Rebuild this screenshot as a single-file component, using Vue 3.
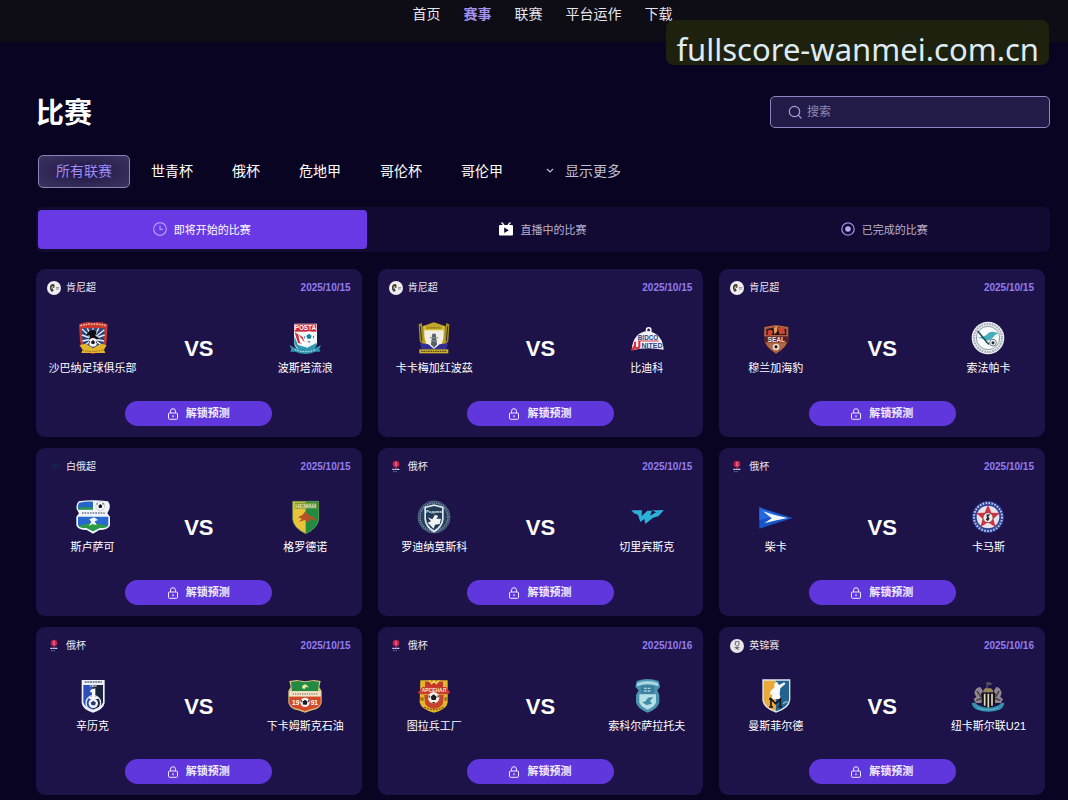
<template>
  <div class="page">
    <svg class="sprite" xmlns="http://www.w3.org/2000/svg" aria-hidden="true">
      <!-- team crests -->
      <symbol id="crest-shabana" viewBox="0 0 102 102">
        <path d="M9 10Q30 0 51 5Q72 0 95 10L92 60Q90 84 51 100Q14 84 12 60Z" fill="#c8382e" />
        <path d="M17 22H86L84 60Q80 78 51 90Q22 78 19 60Z" fill="#28467e" />
        <g stroke="#e8eef4" stroke-width="4">
          <path d="M51 54L18 24M51 54L34 22M51 54L51 22M51 54L68 22M51 54L85 26M51 54L18 42M51 54L86 42M51 54L19 60M51 54L84 60M51 54L24 74M51 54L79 74" />
        </g>
        <path d="M30 42L40 30L52 26L62 32L58 44L70 52L58 58H38L42 44Z" fill="#120f18" />
        <path d="M13 14Q51 4 90 14" fill="none" stroke="#f3c9b8" stroke-width="4" stroke-dasharray="5 3" />
        <path d="M10 72L30 68L51 82L74 68L92 72L84 86L88 96H16L20 86Z" fill="#e2b52c" />
        <circle cx="51" cy="64" r="13" fill="#f4f4f4" />
        <path d="M51 57l6 5-2 7h-8l-2-7zM39 60l4 2-3 6zM62 60l-3 3 4 5z" fill="#1a1a24" />
        <path d="M20 88Q51 96 84 86" fill="none" stroke="#8c6415" stroke-width="3" stroke-dasharray="4 3" />
      </symbol>
      <symbol id="crest-posta" viewBox="0 0 102 102">
        <path d="M18 8H87V66Q84 86 52 98Q20 86 18 66Z" fill="#eef5f7" />
        <path d="M20 10H85V32H20Z" fill="#cf2438" />
        <text x="52" y="27" class="crest-text" font-size="19" fill="#fff">POSTA</text>
        <path d="M20 34L44 48L52 70L30 66Z" fill="#d42a3d" />
        <path d="M19 46L30 72L58 80L85 66V74Q70 92 52 96Q26 86 19 66Z" fill="#2b98b4" />
        <circle cx="63" cy="48" r="17" fill="#f7fbfc" />
        <path d="M63 38l8 6-3 9H58l-3-9zM48 44l4 5-3 5zM78 43l-4 5 4 6zM57 61h11l-5 4z" fill="#1d7f9e" />
        <path d="M30 38L48 62L64 70L50 74L36 64Z" fill="#fff" />
        <path d="M4 72L20 80Q52 94 84 80L99 72L94 84L97 92L82 92Q52 106 22 92L7 92L10 84Z" fill="#2f93ad" />
        <path d="M20 86Q52 98 84 86" fill="none" stroke="#d9eef4" stroke-width="3" stroke-dasharray="5 3" />
      </symbol>
      <symbol id="crest-homeboyz" viewBox="0 0 102 102">
        <path d="M16 16L51 4L86 16Q90 60 80 84H22Q12 60 16 16Z" fill="#bfa62b" />
        <path d="M22 26H80Q82 58 70 74L51 84L32 74Q20 58 22 26Z" fill="#f1efe4" />
        <path d="M20 14Q51 28 82 14L80 28H22Z" fill="#d8bd2e" />
        <path d="M28 21H74" stroke="#5c4a16" stroke-width="3" stroke-dasharray="5 2" />
        <path d="M5 10L14 6L20 40L18 72L8 60ZM97 10L88 6L82 40L84 72L94 60Z" fill="#a58f22" />
        <path d="M10 16L14 60M92 16L88 60" stroke="#3c3413" stroke-width="3" />
        <path d="M8 66L34 70L51 84L68 70L94 66L88 84H14Z" fill="#322e93" />
        <path d="M46 38H56L60 70L51 80L42 70Z" fill="#55606a" />
        <path d="M38 50H64M42 60H60" stroke="#8a9298" stroke-width="3" />
        <path d="M7 85H94V97H7Z" fill="#cdb233" />
        <path d="M12 91H90" stroke="#5e4d14" stroke-width="4" stroke-dasharray="5 2" />
      </symbol>
      <symbol id="crest-bidco" viewBox="0 0 102 102">
        <path d="M5 88Q8 34 54 30Q98 38 101 86Q50 76 5 88Z" fill="#eef0f6" />
        <circle cx="56" cy="27" r="9" fill="#f8f8fa" />
        <path d="M56 22l5 4-2 5h-6l-2-5z" fill="#20264e" />
        <text x="54" y="56" class="crest-text" font-size="19" fill="#25418c">BIDCO</text>
        <path d="M24 60H86" stroke="#d43a4a" stroke-width="3" />
        <text x="66" y="80" class="crest-text" font-size="21" fill="#2b3f86">NITED</text>
        <path d="M15 62V76Q15 82 21 82Q28 82 28 76V60" fill="none" stroke="#d92f3d" stroke-width="6" />
        <path d="M4 90Q8 74 16 70L14 86Z" fill="#d92f3d" />
      </symbol>
      <symbol id="crest-seal" viewBox="0 0 102 102">
        <path d="M16 18L51 12L88 18V56Q84 78 51 98Q20 78 15 56Z" fill="#b4633d" />
        <path d="M22 24L51 18L82 24V42H22Z" fill="#2c1420" />
        <path d="M26 30Q36 22 42 32L36 46H26ZM56 22L76 18L78 38L62 40Z" fill="#c9472f" />
        <path d="M44 20L56 16L54 32L46 40Z" fill="#e39a5c" />
        <path d="M15 46H88V64H15Z" fill="#54202a" />
        <text x="52" y="62" class="crest-text" font-size="20" fill="#f4e3d6">SEAL</text>
        <path d="M26 70L51 66L76 70Q66 84 51 92Q34 84 26 70Z" fill="#b06a48" />
        <circle cx="51" cy="78" r="10" fill="#ecdccd" />
        <path d="M51 72l5 4-2 6h-6l-2-6z" fill="#2a1820" />
      </symbol>
      <symbol id="crest-sofapaka" viewBox="0 0 102 102">
        <circle cx="51" cy="51" r="49" fill="#e9edf0" />
        <circle cx="51" cy="51" r="42" fill="none" stroke="#a3adb8" stroke-width="6" stroke-dasharray="5 3" />
        <circle cx="51" cy="51" r="35" fill="#f8fafb" stroke="#5d6c7c" stroke-width="2" />
        <path d="M20 50Q44 48 52 36Q66 28 82 38Q70 40 66 50Q52 64 40 54Z" fill="#45aebb" />
        <path d="M20 30L48 64L54 70" fill="none" stroke="#28505f" stroke-width="5" />
        <circle cx="66" cy="65" r="10" fill="#fff" stroke="#2b3440" stroke-width="2" />
        <path d="M66 60l5 4-2 6h-6l-2-6z" fill="#222b36" />
      </symbol>
      <symbol id="crest-slutsk" viewBox="0 0 102 102">
        <path d="M8 4Q50-3 96 4Q104 14 100 28L94 40L102 50V76Q98 90 70 90L51 101L32 90Q4 90 1 76V50L9 40L2 28Q-1 14 8 4Z" fill="#f2f6fa" />
        <path d="M9 8Q30 4 51 5V28H6Q4 16 9 8Z" fill="#2465c9" />
        <path d="M6 22H51V29H7Z" fill="#2f9350" />
        <circle cx="73" cy="18" r="13" fill="#fff" stroke="#aab4c0" stroke-width="2" />
        <path d="M73 12l6 5-2 7h-8l-2-7zM61 12l4-3v5zM85 12l-5-3v5z" fill="#151a22" />
        <path d="M18 39H86" stroke="#6a7488" stroke-width="5" stroke-dasharray="5 3" />
        <path d="M6 50H97V74Q92 84 70 84L51 94L32 84Q10 84 6 74Z" fill="#2868d0" />
        <path d="M7 78Q50 62 96 78Q92 84 70 84L51 94L32 84Q12 84 7 78Z" fill="#2d9a45" />
        <path d="M40 58L54 52L66 60L56 64L62 76L50 72L38 78L46 66Z" fill="#f5f8fb" />
      </symbol>
      <symbol id="crest-gorodeya" viewBox="0 0 102 102">
        <path d="M14 4H92V58Q90 84 53 101Q16 84 14 58Z" fill="#e8c43a" />
        <path d="M53 4H92V58Q90 84 53 101Z" fill="#218a43" />
        <path d="M20 8H86V26H20Z" fill="#7d9a3f" />
        <text x="53" y="24" class="crest-text" font-size="17" fill="#dfe0b4">НЕМАН</text>
        <path d="M30 52L44 44L52 34L60 44L76 50L84 62L66 58L60 68L50 60L32 66L42 56Z" fill="#b25425" />
        <path d="M14 4H92V58Q90 84 53 101Q16 84 14 58Z" fill="none" stroke="#5e9a53" stroke-width="2" />
      </symbol>
      <symbol id="crest-rodina" viewBox="0 0 102 102">
        <circle cx="51" cy="51" r="48" fill="#28405c" stroke="#6f89a1" stroke-width="2" />
        <circle cx="51" cy="51" r="42" fill="none" stroke="#8aa2b6" stroke-width="4" stroke-dasharray="4 3" />
        <path d="M22 20L51 13L80 20V58Q78 82 51 98Q24 82 22 58Z" fill="#dfe8ee" />
        <path d="M27 24L51 18L75 24V56Q73 78 51 91Q29 78 27 56Z" fill="#223a56" />
        <text x="51" y="38" class="crest-text" font-size="13" fill="#dfe8ee">Родина</text>
        <path d="M32 52L46 58L54 44L64 48L58 56L72 56L68 72L54 74L50 86L40 76L32 68L42 64Z" fill="#eef3f6" />
      </symbol>
      <symbol id="crest-chelyabinsk" viewBox="0 0 102 102">
        <path d="M4 31H36L35 48L52 32H66L60 47L78 37H84L88 31H101L86 48L68 54L46 72L43 57L31 66L24 44L12 40Z" fill="#2cb1d7" />
        <path d="M66 31H101L84 40Z" fill="#2cb1d7" />
      </symbol>
      <symbol id="crest-chaika" viewBox="0 0 102 102">
        <path d="M1 22L101 54L1 86Z" fill="#1756c8" />
        <path d="M1 22L60 46L1 60Z" fill="#2468df" />
        <path d="M12 34L44 44L86 54L46 62L16 70L38 55Z" fill="#f3f8fc" />
      </symbol>
      <symbol id="crest-kamaz" viewBox="0 0 102 102">
        <circle cx="51" cy="51" r="48" fill="#2b3f95" />
        <circle cx="51" cy="51" r="42" fill="none" stroke="#bfcaea" stroke-width="6" stroke-dasharray="5 4" />
        <circle cx="51" cy="51" r="34" fill="#e8e2ea" />
        <path d="M51 14L61 38L87 39L67 56L74 82L51 67L28 82L35 56L15 39L41 38Z" fill="#cf3342" />
        <circle cx="51" cy="53" r="15" fill="#f1ece4" stroke="#7c2333" stroke-width="2" />
        <path d="M46 44L58 42L52 50L56 56L50 64L44 58L48 54Z" fill="#26253c" />
      </symbol>
      <symbol id="crest-sinara" viewBox="0 0 102 102">
        <path d="M17 3H86V72Q82 92 51 101Q20 92 17 72Z" fill="#eef2f8" />
        <path d="M22 18H50V92Q24 84 22 70Z" fill="#2c50ba" />
        <path d="M50 18H81V70Q78 84 50 92Z" fill="#18243f" />
        <path d="M26 9H78" stroke="#5a6684" stroke-width="5" stroke-dasharray="6 2" />
        <text x="51" y="25" class="crest-text" font-size="10" fill="#d7def0">1960</text>
        <circle cx="52" cy="72" r="22" fill="none" stroke="#e3e9f4" stroke-width="4" />
        <path d="M44 32L58 28V54H66V60H40V54H48V40H42Z" fill="#f8fafc" />
        <circle cx="52" cy="73" r="14" fill="#f5f7fa" />
        <path d="M52 65l8 6-3 8H47l-3-8z" fill="#263a78" />
      </symbol>
      <symbol id="crest-neftekhimik" viewBox="0 0 102 102">
        <path d="M4 6L26 3L51 7L78 3L98 6L94 24L101 36V72Q94 92 72 94L51 101L30 94Q8 92 1 72V36L8 24Z" fill="#d9c27a" />
        <path d="M9 9L28 6L51 10L76 6L93 9L90 36H12Z" fill="#228a42" />
        <path d="M42 28Q42 18 52 16Q60 20 62 26L54 23L50 30Z" fill="#f0e9a0" />
        <path d="M4 37H98V52H4Z" fill="#efe6cf" />
        <path d="M14 45H88" stroke="#a08a66" stroke-width="5" stroke-dasharray="4 3" />
        <path d="M4 53H98V72Q92 88 70 90L51 97L32 90Q10 88 4 72Z" fill="#d4482b" />
        <text x="23" y="77" class="crest-text" font-size="20" fill="#fff">19</text>
        <text x="79" y="77" class="crest-text" font-size="20" fill="#fff">91</text>
        <circle cx="51" cy="70" r="14" fill="#f6f6f6" />
        <path d="M51 62l8 6-3 9H46l-3-9zM38 66l4-4v8zM64 66l-4-4v8z" fill="#1c1c22" />
      </symbol>
      <symbol id="crest-arsenal-tula" viewBox="0 0 102 102">
        <path d="M10 4H92V70Q90 92 51 101Q12 92 8 70Z" fill="#e5b62b" />
        <path d="M24 8H78V26H24Z" fill="#c2392a" />
        <path d="M36 4L44 14L51 6L58 14L66 4" fill="none" stroke="#f3d75f" stroke-width="4" />
        <path d="M2 42L16 24H88L100 42L88 46H14Z" fill="#c93a30" />
        <text x="51" y="40" class="crest-text" font-size="15" fill="#f6e6cf">АРСЕНАЛ</text>
        <path d="M22 48H80L78 72Q74 86 51 90Q28 86 24 72Z" fill="#c4452b" />
        <circle cx="15" cy="60" r="6" fill="#a87613" />
        <circle cx="87" cy="60" r="6" fill="#a87613" />
        <circle cx="50" cy="56" r="17" fill="#f5f1ea" />
        <path d="M50 46l9 7-3 10H44l-3-10zM34 54l4-6v10zM66 52l-4-5v10zM44 69h12l-6 4z" fill="#211a20" />
        <path d="M22 84Q51 100 80 84" fill="none" stroke="#8e5b12" stroke-width="4" stroke-dasharray="6 3" />
      </symbol>
      <symbol id="crest-sokol" viewBox="0 0 102 102">
        <path d="M20 6Q51-6 86 6L90 24L82 34L88 48V70Q84 90 53 101Q22 90 18 70V48L26 34L16 24Z" fill="#4b93ae" />
        <path d="M22 12Q53 0 84 12L86 22Q53 10 20 22Z" fill="#a8d7e2" />
        <path d="M32 22Q53 14 74 22L72 44H34Z" fill="#3c7f9d" />
        <path d="M42 28H64M42 36H64" stroke="#a9cfdd" stroke-width="4" stroke-dasharray="8 3" />
        <path d="M28 46H78V70Q74 84 53 92Q32 84 28 70Z" fill="#b4e0e6" />
        <path d="M36 70Q48 68 54 56L70 54L60 66L66 74L50 78Z" fill="#418ba5" />
      </symbol>
      <symbol id="crest-mansfield" viewBox="0 0 102 102">
        <path d="M10 1H94V62Q92 88 51 101Q12 88 10 62Z" fill="#dfeaf0" />
        <path d="M14 5H51V97Q16 84 14 62Z" fill="#eba93a" />
        <path d="M51 5H90V62Q88 84 51 97Z" fill="#236390" />
        <path d="M46 14L54 8L60 18L76 10L79 15L64 28L62 46L66 60H38L40 44L32 48L36 34L46 26Z" fill="#f8fafa" />
        <path d="M36 84V60L50 74L64 60V84M30 60H40M30 84H42M58 84H70" fill="none" stroke="#15151c" stroke-width="5" />
        <path d="M72 74Q80 66 86 70" fill="none" stroke="#7fc0d4" stroke-width="4" />
      </symbol>
      <symbol id="crest-newcastle" viewBox="0 0 102 102">
        <path d="M46 10H50V34H46ZM50 8L66 14L52 20Z" fill="#5d5662" />
        <path d="M10 42Q14 24 28 24L36 36L30 46L36 72H14L8 60L16 54Z" fill="#8e8790" />
        <path d="M92 42Q88 24 76 24L68 36L74 46L68 72H90L96 60L88 54Z" fill="#8e8790" />
        <path d="M18 36L30 54M84 36L74 54M16 64L32 58M88 64L72 58" stroke="#39343f" stroke-width="4" />
        <path d="M38 34L42 28H60L66 34V40H36Z" fill="#9b8a57" />
        <path d="M32 42H72V70Q68 84 52 88Q36 84 32 70Z" fill="#15131b" />
        <path d="M41 44V80M52 44V86M63 44V80" stroke="#e2d8bd" stroke-width="5" />
        <path d="M2 72Q14 70 20 78Q52 94 84 78Q90 70 100 72Q98 86 86 92Q52 104 18 92Q4 86 2 72Z" fill="#3192ae" />
        <path d="M20 86Q52 99 84 86" fill="none" stroke="#7cc4d6" stroke-width="3" stroke-dasharray="5 3" />
      </symbol>

      <!-- league badges -->
      <symbol id="league-kenya" viewBox="0 0 42 42">
        <circle cx="21" cy="21" r="21" fill="#f0eeee" />
        <path d="M9 16Q12 8 20 9Q25 12 22 20L17 22L20 30L13 32L9 24Z" fill="#3a363a" />
        <path d="M13 17L20 14L18 21L14 26Z" fill="#d9b67c" />
        <path d="M27 20H37M27 24H35" stroke="#8a8c92" stroke-width="3" />
      </symbol>
      <symbol id="league-belarus" viewBox="0 0 42 42">
        <path d="M6 10L14 16L26 10L38 8L34 18L24 26L14 34L16 22Z" fill="#16204e" />
      </symbol>
      <symbol id="league-ruscup" viewBox="0 0 42 42">
        <circle cx="21" cy="12" r="10" fill="#c41f4c" />
        <path d="M18 7H24L22 12L25 17H18L20 12Z" fill="#e58ba0" />
        <path d="M18 20H24V25H18Z" fill="#b02249" />
        <path d="M10 28H32" stroke="#d8d3e4" stroke-width="4" stroke-dasharray="6 1" />
        <path d="M12 35H26" stroke="#5b6cb4" stroke-width="3" stroke-dasharray="5 2" />
      </symbol>
      <symbol id="league-efl" viewBox="0 0 42 42">
        <circle cx="21" cy="21" r="21" fill="#e9e6e8" />
        <path d="M16 8H27V18L21 22L16 18Z" fill="none" stroke="#716a78" stroke-width="3" />
        <path d="M14 26H28M18 31L21 27L26 33" fill="none" stroke="#5b5463" stroke-width="3" />
      </symbol>
    </svg>

    <header class="topbar">
      <nav class="nav">
        <a v-for="item in navItems" :key="item" href="#" class="nav-link" :class="{ active: item === '赛事' }">{{ item }}</a>
      </nav>
      <div class="site-badge">fullscore-wanmei.com.cn</div>
    </header>

    <main class="content">
      <div class="title-row">
        <h1 class="title">比赛</h1>
        <label class="search">
          <svg class="search-icon" viewBox="0 0 14 14" fill="none" stroke="currentColor" stroke-width="1.2" stroke-linecap="round">
            <circle cx="6.5" cy="6.5" r="5.2" />
            <path d="M10.4 10.4L13 13" />
          </svg>
          <input v-model="keyword" type="text" placeholder="搜索" aria-label="搜索" />
        </label>
      </div>

      <div class="filters">
        <button
          v-for="league in leagues"
          :key="league"
          type="button"
          class="filter"
          :class="{ active: league === activeLeague }"
          @click="activeLeague = league"
        >
          {{ league }}
        </button>
        <button type="button" class="filter more">
          <svg class="chevron" viewBox="0 0 16 16" fill="none" stroke="currentColor" stroke-width="1.2">
            <path d="M5 7L8 10L11 7" />
          </svg>
          显示更多
        </button>
      </div>

      <div class="tabs">
        <button
          v-for="tab in tabs"
          :key="tab.id"
          type="button"
          class="tab"
          :class="{ active: tab.id === activeTab }"
          @click="activeTab = tab.id"
        >
          <svg v-if="tab.id === 'upcoming'" class="tab-icon" viewBox="0 0 14 14" fill="none" stroke="#b09cf4" stroke-width="1.2">
            <circle cx="7" cy="7" r="6.3" />
            <path d="M7 3.5V7.4H10" />
          </svg>
          <svg v-else-if="tab.id === 'live'" class="tab-icon" viewBox="0 0 14 14">
            <path d="M2.5 0.5L5 3M11.5 0.5L9 3" stroke="#fff" stroke-width="1.3" />
            <path fill-rule="evenodd" d="M1 3H13Q14 3 14 4V12.5Q14 13.5 13 13.5H1Q0 13.5 0 12.5V4Q0 3 1 3ZM5.2 5.6V11L9.8 8.3Z" fill="#fff" />
          </svg>
          <svg v-else class="tab-icon" viewBox="0 0 14 14">
            <circle cx="7" cy="7" r="6.2" fill="none" stroke="#9d8ce0" stroke-width="1.3" />
            <circle cx="7" cy="7" r="2.8" fill="#b5a8ee" />
          </svg>
          {{ tab.label }}
        </button>
      </div>

      <section class="grid">
        <article v-for="match in matches" :key="match.home.name" class="card">
          <div class="card-head">
            <svg class="league-icon"><use :href="'#league-' + match.badge" /></svg>
            <span class="league">{{ match.league }}</span>
            <time class="date">{{ match.date }}</time>
          </div>
          <div class="versus">
            <div class="team">
              <svg class="crest"><use :href="'#crest-' + match.home.crest" /></svg>
              <span class="team-name">{{ match.home.name }}</span>
            </div>
            <strong class="vs">VS</strong>
            <div class="team">
              <svg class="crest"><use :href="'#crest-' + match.away.crest" /></svg>
              <span class="team-name">{{ match.away.name }}</span>
            </div>
          </div>
          <button type="button" class="unlock">
            <svg class="lock" viewBox="0 0 10 12" fill="none" stroke="currentColor">
              <path d="M2.5 5V3.2A2.5 2.5 0 0 1 7.5 3.2V5" />
              <rect x="0.5" y="5" width="9" height="6.3" rx="1" />
              <path d="M5 7.2V9.2" stroke-width="1.2" />
            </svg>
            <span class="unlock-label">解锁预测</span>
          </button>
        </article>
      </section>
    </main>
  </div>
</template>

<script setup>
import { ref } from 'vue'

const navItems = ['首页', '赛事', '联赛', '平台运作', '下载']
const leagues = ['所有联赛', '世青杯', '俄杯', '危地甲', '哥伦杯', '哥伦甲']
const tabs = [
  { id: 'upcoming', label: '即将开始的比赛' },
  { id: 'live', label: '直播中的比赛' },
  { id: 'finished', label: '已完成的比赛' }
]

const keyword = ref('')
const activeLeague = ref('所有联赛')
const activeTab = ref('upcoming')

const matches = [
  {
    league: '肯尼超', badge: 'kenya', date: '2025/10/15',
    home: { name: '沙巴纳足球俱乐部', crest: 'shabana' },
    away: { name: '波斯塔流浪', crest: 'posta' }
  },
  {
    league: '肯尼超', badge: 'kenya', date: '2025/10/15',
    home: { name: '卡卡梅加红波茲', crest: 'homeboyz' },
    away: { name: '比迪科', crest: 'bidco' }
  },
  {
    league: '肯尼超', badge: 'kenya', date: '2025/10/15',
    home: { name: '穆兰加海豹', crest: 'seal' },
    away: { name: '索法帕卡', crest: 'sofapaka' }
  },
  {
    league: '白俄超', badge: 'belarus', date: '2025/10/15',
    home: { name: '斯卢萨可', crest: 'slutsk' },
    away: { name: '格罗德诺', crest: 'gorodeya' }
  },
  {
    league: '俄杯', badge: 'ruscup', date: '2025/10/15',
    home: { name: '罗迪纳莫斯科', crest: 'rodina' },
    away: { name: '切里宾斯克', crest: 'chelyabinsk' }
  },
  {
    league: '俄杯', badge: 'ruscup', date: '2025/10/15',
    home: { name: '柴卡', crest: 'chaika' },
    away: { name: '卡马斯', crest: 'kamaz' }
  },
  {
    league: '俄杯', badge: 'ruscup', date: '2025/10/15',
    home: { name: '辛历克', crest: 'sinara' },
    away: { name: '下卡姆斯克石油', crest: 'neftekhimik' }
  },
  {
    league: '俄杯', badge: 'ruscup', date: '2025/10/16',
    home: { name: '图拉兵工厂', crest: 'arsenal-tula' },
    away: { name: '索科尔萨拉托夫', crest: 'sokol' }
  },
  {
    league: '英锦赛', badge: 'efl', date: '2025/10/16',
    home: { name: '曼斯菲尔德', crest: 'mansfield' },
    away: { name: '纽卡斯尔联U21', crest: 'newcastle' }
  }
]
</script>

<style>
body {
  margin: 0;
  background: #080421;
}
</style>

<style scoped>
.page {
  min-height: 100vh;
  background: #080421;
  color: #fff;
  font-family: "Liberation Sans", "Noto Sans CJK SC", sans-serif;
}

.page button {
  border: none;
  background: none;
  color: inherit;
  font-family: inherit;
  cursor: pointer;
}

.sprite {
  display: none;
}

.crest-text {
  font-family: "Liberation Sans", sans-serif;
  font-weight: 700;
  text-anchor: middle;
}

/* Top bar */
.topbar {
  position: relative;
  height: 42px;
  background: #0e0c15;
}

.nav {
  display: flex;
  justify-content: center;
  gap: 23px;
  padding: 4px 0 0 17px;
}

.nav-link {
  font-size: 14px;
  line-height: 20px;
  color: #e6e4ec;
  text-decoration: none;
}

.nav-link.active {
  color: #a592f0;
  font-weight: 700;
}

.site-badge {
  position: absolute;
  top: 20px;
  right: 19px;
  padding: 6px 10px 0;
  height: 39px;
  border-radius: 8px;
  background: #1e210e;
  color: #deebf5;
  font-family: "Noto Sans", sans-serif;
  font-size: 31px;
  line-height: 46px;
  white-space: nowrap;
}

/* Title and search */
.content {
  padding: 54px 18px 5px 36px;
}

.title-row {
  display: flex;
  align-items: flex-start;
  justify-content: space-between;
  height: 32px;
}

.title {
  margin: 0;
  font-size: 28px;
  line-height: 36px;
  font-weight: 700;
}

.search {
  display: flex;
  align-items: center;
  gap: 5px;
  box-sizing: border-box;
  width: 280px;
  height: 32px;
  padding: 0 17px;
  border: 1px solid #8d85c4;
  border-radius: 5px;
  background: #221b48;
}

.search-icon {
  width: 14px;
  height: 14px;
  color: #a79fd6;
}

.search input {
  flex: 1;
  min-width: 0;
  padding: 0;
  border: none;
  outline: none;
  background: transparent;
  color: #fff;
  font-family: inherit;
  font-size: 12px;
}

.search input::placeholder {
  color: #8f88b4;
  opacity: 1;
}

/* League filters */
.filters {
  display: flex;
  gap: 3px;
  margin-top: 27px;
  padding-left: 2px;
}

.page .filter {
  display: flex;
  align-items: center;
  height: 33px;
  padding: 0 17px 4px;
  border: 1px solid transparent;
  border-radius: 5px;
  font-size: 14px;
}

.page .filter.active {
  border-color: #8a82b8;
  background: radial-gradient(ellipse at center, #251c4c 20%, #3d345f 100%);
  color: #9f8cf5;
}

.page .filter.more {
  gap: 7px;
  color: #c3bfd2;
}

.chevron {
  width: 16px;
  height: 16px;
}

/* Status tabs */
.tabs {
  display: flex;
  gap: 12px;
  margin: 19px 0 17px;
  padding: 3px 0 3px 2px;
  border-radius: 6px;
  background: #130a33;
}

.page .tab {
  display: flex;
  flex: 1;
  align-items: center;
  justify-content: center;
  gap: 7px;
  height: 39px;
  padding: 0 2px 1px 0;
  border-radius: 4px;
  color: #b9b2cf;
  font-size: 11px;
}

.page .tab.active {
  background: #6a39e6;
  color: #fff;
}

.tab-icon {
  width: 14px;
  height: 14px;
}

/* Match cards */
.grid {
  display: grid;
  grid-template-columns: repeat(3, 1fr);
  gap: 11px 16px;
  padding-right: 5px;
}

.card {
  padding: 11px;
  border-radius: 9px;
  background: #1d1349;
}

.card-head {
  display: flex;
  align-items: center;
  gap: 5px;
  height: 16px;
  font-size: 10px;
  line-height: 16px;
}

.league-icon {
  width: 14px;
  height: 14px;
}

.league {
  color: #e9e7f1;
}

.date {
  margin-left: auto;
  color: #927cf0;
  font-weight: 700;
}

.versus {
  display: flex;
  align-items: center;
  justify-content: space-between;
  margin: 25px 0;
}

.team {
  display: flex;
  flex-direction: column;
  align-items: center;
  gap: 5px;
  width: 91px;
}

.crest {
  width: 34px;
  height: 34px;
}

.team-name {
  font-size: 11px;
  line-height: 16px;
  white-space: nowrap;
}

.vs {
  font-size: 22px;
  line-height: 24px;
}

.page .unlock {
  display: flex;
  align-items: center;
  justify-content: center;
  gap: 8px;
  width: 147px;
  height: 25px;
  margin: 0 auto;
  padding: 0;
  border-radius: 13px;
  background: #6037dc;
  color: #f0ecfb;
  font-size: 11px;
  font-weight: 700;
}

.unlock-label {
  padding-bottom: 3px;
}

.lock {
  width: 10px;
  height: 12px;
}
</style>
